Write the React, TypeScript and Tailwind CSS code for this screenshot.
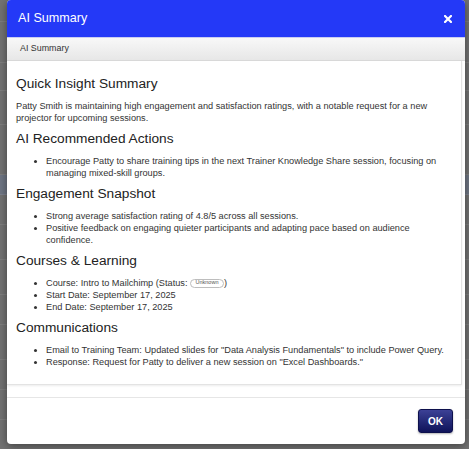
import * as React from "react";

const font = "font-['Liberation_Sans',Arial,sans-serif]";

interface SectionProps {
  title: string;
  children: React.ReactNode;
}

const Section: React.FC<SectionProps> = (props) => {
  return (
    <>
      <h2 className="text-[13.7px] leading-[16px] font-normal text-[#222]">
        {props.title}
      </h2>
      {props.children}
    </>
  );
};

const Bullets: React.FC<{ items: React.ReactNode[] }> = (props) => {
  return (
    <ul className="list-disc pl-[30px] text-[9.2px] leading-[12px] text-[#333]">
      {props.items.map((item, i) => (
        <li key={i}>{item}</li>
      ))}
    </ul>
  );
};

const BackgroundRows = () => {
  const rows = [22, 41, 28, 34, 50, 20, 30, 35, 35, 30, 35, 30, 30, 30];
  return (
    <div className="flex flex-col">
      {rows.map((h, i) => (
        <div
          key={i}
          className={
            i === 5
              ? "border-b border-[#7d8290] bg-[#6f7684]"
              : "border-b border-[#7f7f7f]"
          }
          style={{ height: h }}
        />
      ))}
    </div>
  );
};

const App = () => {
  const courseLine = (
    <span>
      Course: Intro to Mailchimp (Status:{" "}
      <span className="inline-flex h-[9px] w-[34px] items-center justify-center rounded-full border border-[#bdbdbd] align-middle text-[5.5px] leading-none text-[#555]">
        Unknown
      </span>
      )
    </span>
  );

  return (
    <div className={"relative h-[449px] w-full overflow-hidden bg-[#737373] " + font}>
      <BackgroundRows />

      <div className="absolute left-[7px] top-0 flex h-[444px] w-[458px] flex-col overflow-hidden rounded-[4px] bg-white shadow-[0_2px_10px_rgba(0,0,0,0.45)]">
        <div className="flex h-[37px] shrink-0 items-center justify-between bg-[#2439f7] pl-[11px] pr-[13px]">
          <div className="text-[12.6px] text-white">AI Summary</div>
          <svg width="8" height="8" viewBox="0 0 8 8">
            <path
              d="M1 1 L7 7 M7 1 L1 7"
              stroke="white"
              strokeWidth="2.2"
              strokeLinecap="square"
            />
          </svg>
        </div>

        <div className="flex h-[24px] shrink-0 items-center border-t border-b border-t-[#c9cdf2] border-b-[#d9d9d9] bg-gradient-to-b from-[#f8f8f8] to-[#e7e7e7] pl-[13px] text-[8.9px] text-[#333]">
          AI Summary
        </div>

        <div className="mr-[3px] flex h-[324px] shrink-0 flex-col gap-[7.5px] border-b border-r border-[#e3e3e3] pl-[9px] pr-[9px] pt-[15px] shadow-[0_1px_2px_rgba(0,0,0,0.08)]">
          <Section title="Quick Insight Summary">
            <p className="text-[9.2px] leading-[12px] text-[#333]">
              Patty Smith is maintaining high engagement and satisfaction
              ratings, with a notable request for a new projector for upcoming
              sessions.
            </p>
          </Section>
          <Section title="AI Recommended Actions">
            <Bullets
              items={[
                "Encourage Patty to share training tips in the next Trainer Knowledge Share session, focusing on managing mixed-skill groups.",
              ]}
            />
          </Section>
          <Section title="Engagement Snapshot">
            <Bullets
              items={[
                "Strong average satisfaction rating of 4.8/5 across all sessions.",
                "Positive feedback on engaging quieter participants and adapting pace based on audience confidence.",
              ]}
            />
          </Section>
          <Section title="Courses & Learning">
            <Bullets
              items={[
                courseLine,
                "Start Date: September 17, 2025",
                "End Date: September 17, 2025",
              ]}
            />
          </Section>
          <Section title="Communications">
            <Bullets
              items={[
                'Email to Training Team: Updated slides for "Data Analysis Fundamentals" to include Power Query.',
                'Response: Request for Patty to deliver a new session on "Excel Dashboards."',
              ]}
            />
          </Section>
        </div>

        <div className="mt-[12px] flex flex-1 items-start justify-end border-t border-[#e6e6e6] pr-[12px] pt-[11px]">
          <button className="h-[24px] w-[35px] rounded-[3px] border border-[#0d104c] bg-gradient-to-b from-[#3c4196] to-[#10135a] text-[10px] font-bold text-white shadow-[0_1px_2px_rgba(0,0,0,0.3)]">
            OK
          </button>
        </div>
      </div>
    </div>
  );
};

export default App;
